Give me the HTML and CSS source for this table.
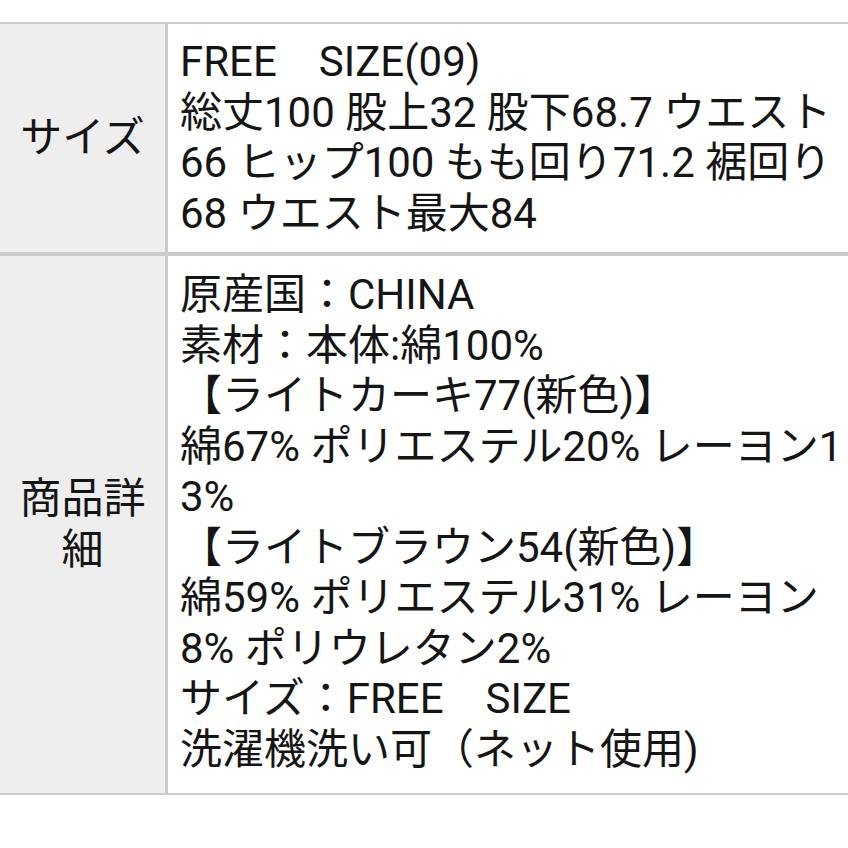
FILE: index.html
```html
<!DOCTYPE html>
<html lang="ja">
<head>
<meta charset="utf-8">
<link rel="stylesheet" href="styles.css">
</head>
<body>
<div class="spec">
  <div class="row">
    <div class="label">サイズ</div>
    <div class="value">
      <div class="line">FREE　SIZE(09)</div>
      <div class="line">総丈100 股上32 股下68.7 ウエスト</div>
      <div class="line">66 ヒップ100 もも回り71.2 裾回り</div>
      <div class="line">68 ウエスト最大84</div>
    </div>
  </div>
  <div class="row">
    <div class="label">商品詳細</div>
    <div class="value">
      <div class="line">原産国：CHINA</div>
      <div class="line">素材：本体:綿100%</div>
      <div class="line">【ライトカーキ77(新色)】</div>
      <div class="line">綿67% ポリエステル20% レーヨン1</div>
      <div class="line">3%</div>
      <div class="line">【ライトブラウン54(新色)】</div>
      <div class="line">綿59% ポリエステル31% レーヨン</div>
      <div class="line">8% ポリウレタン2%</div>
      <div class="line">サイズ：FREE　SIZE</div>
      <div class="line">洗濯機洗い可（ネット使用)</div>
    </div>
  </div>
</div>
</body>
</html>
```
FILE: styles.css
```css
html, body {
  margin: 0;
  padding: 0;
  background: #ffffff;
}
body {
  font-family: Roboto, "Noto Sans CJK JP", sans-serif;
  font-size: 42px;
  line-height: 50.5px;
  color: #151515;
}
.spec {
  margin-top: 22px;
  border-top: 2px solid #cccccc;
  border-bottom: 2px solid #cccccc;
}
.row {
  display: grid;
  grid-template-columns: 168px 1fr;
}
.row + .row {
  border-top: 4px solid #cccccc;
}
.label {
  background: #eeeeee;
  border-right: 3px solid #cccccc;
  display: flex;
  align-items: center;
  justify-content: center;
  text-align: center;
  padding: 0 18px;
}
.value {
  padding: 13px 12px;
}
.row + .row .value {
  padding: 14px 12px 18px;
}
.line {
  white-space: nowrap;
}
```
